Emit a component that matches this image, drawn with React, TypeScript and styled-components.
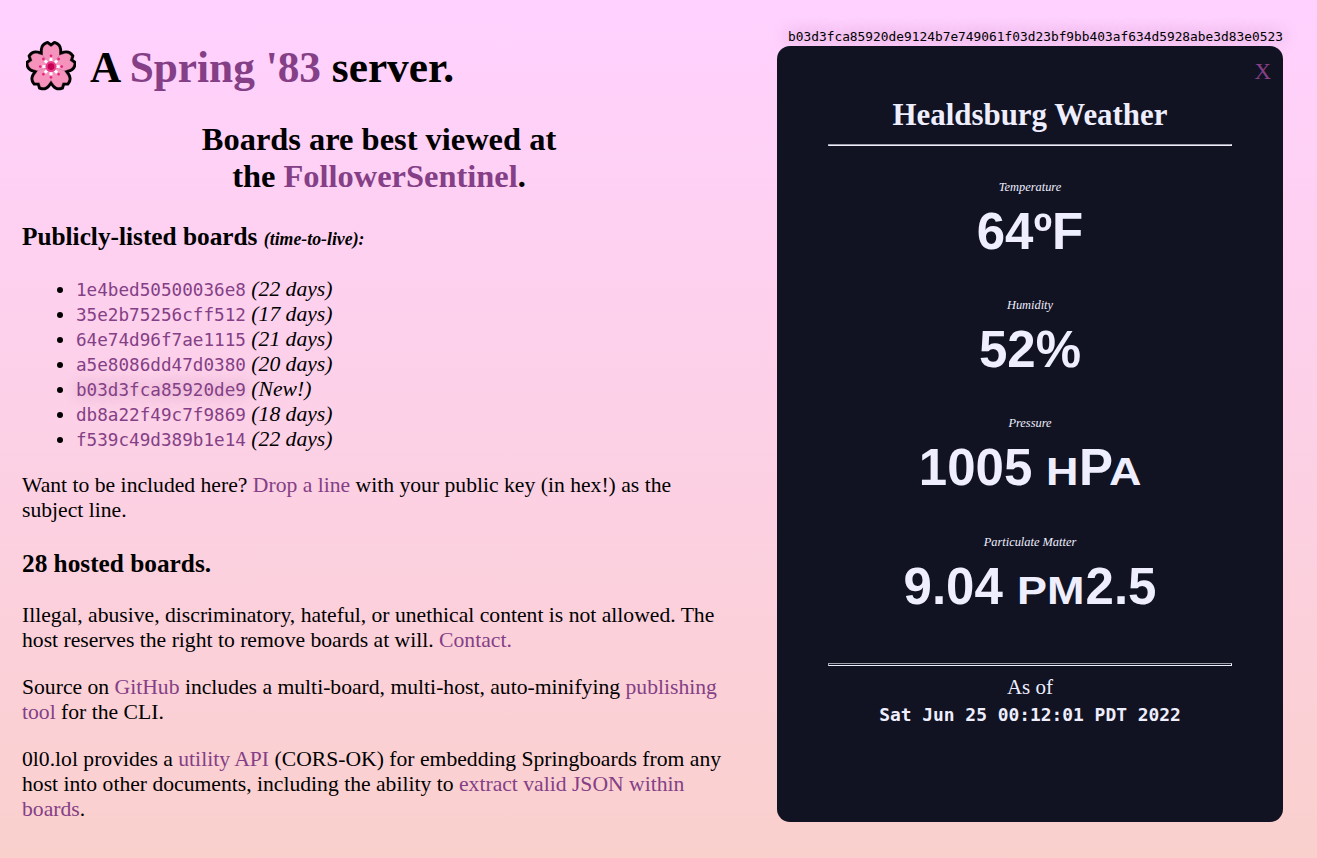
import React from "react";
import styled, { createGlobalStyle } from "styled-components";

const serif = `"Liberation Serif", "Times New Roman", serif`;
const mono = `"DejaVu Sans Mono", monospace`;

const GlobalStyle = createGlobalStyle`
  html { height: 100%; }
  body {
    margin: 0;
    height: 858px;
    overflow: hidden;
    background: linear-gradient(to bottom, #ffd1ff, #fad0cd);
    font: 21.65px/25px ${serif};
    color: #000;
  }
`;

const Page = styled.div`
  display: flex;
  height: 858px;
  box-sizing: border-box;
  padding-left: 22px;
`;

const Info = styled.main`
  width: 714px;
  padding-top: 42px;
`;

const Link = styled.a`
  color: #843f86;
  text-decoration: none;
`;

const Title = styled.h1`
  display: flex;
  align-items: center;
  margin: 0 0 28px;
  height: 51px;
  font-size: 43.3px;
  line-height: 51px;
  white-space: pre;
`;

const Flower = styled.svg`
  width: 50px;
  height: 50px;
  margin: -4px 14px 0 4px;
`;

const Subtitle = styled.h2`
  margin: 0 0 27px;
  font-size: 32.45px;
  line-height: 37px;
  text-align: center;
`;

const Heading = styled.h3<{ $before?: number; $after: number }>`
  margin: ${(p) => p.$before ?? 0}px 0 ${(p) => p.$after}px;
  font-size: 25.3px;
  line-height: 29px;
`;

const Small = styled.i`
  font-size: 17.8px;
`;

const BoardList = styled.ul`
  margin: 0 0 21px;
  padding-left: 54px;
`;

const Key = styled(Link)<{ $active?: boolean }>`
  font: 17.65px/20px ${mono};
  ${(p) => p.$active && "text-shadow: 0 0 14px rgba(132, 63, 134, 0.4);"}
`;

const Text = styled.p`
  margin: 0 0 22px;
`;

const BoardColumn = styled.aside`
  width: 506px;
  margin-left: 41px;
  padding-top: 29px;
`;

const FullKey = styled.div`
  width: 495px;
  margin: 0 0 2px 11px;
  font: 12.85px/15px ${mono};
  white-space: nowrap;
  text-shadow: 0 0 14px rgba(132, 63, 134, 0.5);
`;

const Board = styled.article`
  position: relative;
  height: 776px;
  box-sizing: border-box;
  padding: 51px 51px 0;
  border-radius: 13px;
  background: #111322;
  color: #eef;
  text-align: center;
`;

const Close = styled(Link)`
  position: absolute;
  top: 13px;
  right: 12px;
  font-size: 23px;
`;

const BoardTitle = styled.h2`
  margin: 0;
  padding-bottom: 11px;
  font-size: 30.9px;
  line-height: 36px;
`;

const TopRule = styled.hr`
  height: 0;
  margin: 0 0 34px;
  border: 1px inset #eef;
`;

const BottomRule = styled.hr`
  height: 1px;
  margin: 10.4px 0 8px;
  border: 1px inset #eef;
`;

const Reading = styled.section`
  height: 118.2px;
`;

const Label = styled.div`
  font-size: 12.4px;
  line-height: 14px;
  font-style: italic;
`;

const Value = styled.div`
  margin-top: 8px;
  font: bold 51px/60px "Liberation Sans", Arial, sans-serif;
  white-space: nowrap;
`;

const SmallCap = styled.span<{ $grow: number; $kern?: number }>`
  display: inline-block;
  margin-left: ${(p) => p.$kern ?? 0}em;
  margin-right: ${(p) => p.$grow}em;
  font-size: 0.76em;
  line-height: 1;
  text-transform: uppercase;
  transform: scaleX(1.16);
  transform-origin: left;
`;

const AsOf = styled.div`
  font-size: 21px;
  line-height: 26px;
`;

const Stamp = styled.div`
  margin-top: 1px;
  font: bold 17.9px/27px ${mono};
  white-space: nowrap;
`;

const boards: [string, string][] = [
  ["1e4bed50500036e8", "(22 days)"],
  ["35e2b75256cff512", "(17 days)"],
  ["64e74d96f7ae1115", "(21 days)"],
  ["a5e8086dd47d0380", "(20 days)"],
  ["b03d3fca85920de9", "(New!)"],
  ["db8a22f49c7f9869", "(18 days)"],
  ["f539c49d389b1e14", "(22 days)"],
];

const readings: [string, React.ReactNode][] = [
  ["Temperature", "64ºF"],
  ["Humidity", "52%"],
  ["Pressure", <>1005 <SmallCap $grow={0.12}>h</SmallCap>P<SmallCap $grow={0.1} $kern={-0.1}>a</SmallCap></>],
  ["Particulate Matter", <>9.04 <SmallCap $grow={0.27}>pm</SmallCap>2.5</>],
];

const petal = "M0 0 L-8.4 -11.6 V-17.5 Q-8 -22 -3.8 -23.2 L0 -20.4 L3.8 -23.2 Q8 -22 8.4 -17.5 V-11.6 Z";
const turns = [0, 72, 144, 216, 288];
const stamens = [0, 45, 90, 135, 180, 225, 270, 315];

const CherryBlossom = () => (
  <Flower viewBox="-26 -26.6 52 52">
    {turns.map((a) => (
      <path key={a} d={petal} transform={`rotate(${a})`} fill="#000" stroke="#000" strokeWidth="6.4" strokeMiterlimit="2" />
    ))}
    {turns.map((a) => (
      <path key={a} d={petal} transform={`rotate(${a})`} fill="#f693bd" stroke="#f693bd" strokeWidth="0.4" />
    ))}
    {stamens.map((a) => (
      <g key={a} transform={`rotate(${a})`}>
        <path d="M0 0V-9" stroke="#fff" strokeWidth="3" />
        <circle cx="0" cy="-11.2" r="1.4" fill="#e3237f" />
      </g>
    ))}
    <circle r="5.8" fill="#ea3b8c" />
    <circle r="3.5" fill="#c30052" />
  </Flower>
);

export default function App() {
  return (
    <>
      <GlobalStyle />
      <Page>
        <Info>
          <Title>
            <CherryBlossom />
            <span>A <Link>Spring '83</Link> server.</span>
          </Title>
          <Subtitle>
            Boards are best viewed at<br />the <Link>FollowerSentinel</Link>.
          </Subtitle>
          <Heading $after={23}>Publicly-listed boards <Small>(time-to-live):</Small></Heading>
          <BoardList>
            {boards.map(([key, ttl], i) => (
              <li key={key}><Key $active={i === 4}>{key}</Key> <i>{ttl}</i></li>
            ))}
          </BoardList>
          <Text>
            Want to be included here? <Link>Drop a line</Link> with your public key (in hex!) as the
            subject line.
          </Text>
          <Heading $before={26} $after={25}>28 hosted boards.</Heading>
          <Text>
            Illegal, abusive, discriminatory, hateful, or unethical content is not allowed. The
            host reserves the right to remove boards at will. <Link>Contact.</Link>
          </Text>
          <Text>
            Source on <Link>GitHub</Link> includes a multi-board, multi-host, auto-minifying{" "}
            <Link>publishing tool</Link> for the CLI.
          </Text>
          <Text>
            0l0.lol provides a <Link>utility API</Link> (CORS-OK) for embedding Springboards from any
            host into other documents, including the ability to{" "}
            <Link>extract valid JSON within boards</Link>.
          </Text>
        </Info>
        <BoardColumn>
          <FullKey>b03d3fca85920de9124b7e749061f03d23bf9bb403af634d5928abe3d83e0523</FullKey>
          <Board>
            <Close>X</Close>
            <BoardTitle>Healdsburg Weather</BoardTitle>
            <TopRule />
            {readings.map(([label, value]) => (
              <Reading key={label}>
                <Label>{label}</Label>
                <Value>{value}</Value>
              </Reading>
            ))}
            <BottomRule />
            <AsOf>As of</AsOf>
            <Stamp>Sat Jun 25 00:12:01 PDT 2022</Stamp>
          </Board>
        </BoardColumn>
      </Page>
    </>
  );
}
